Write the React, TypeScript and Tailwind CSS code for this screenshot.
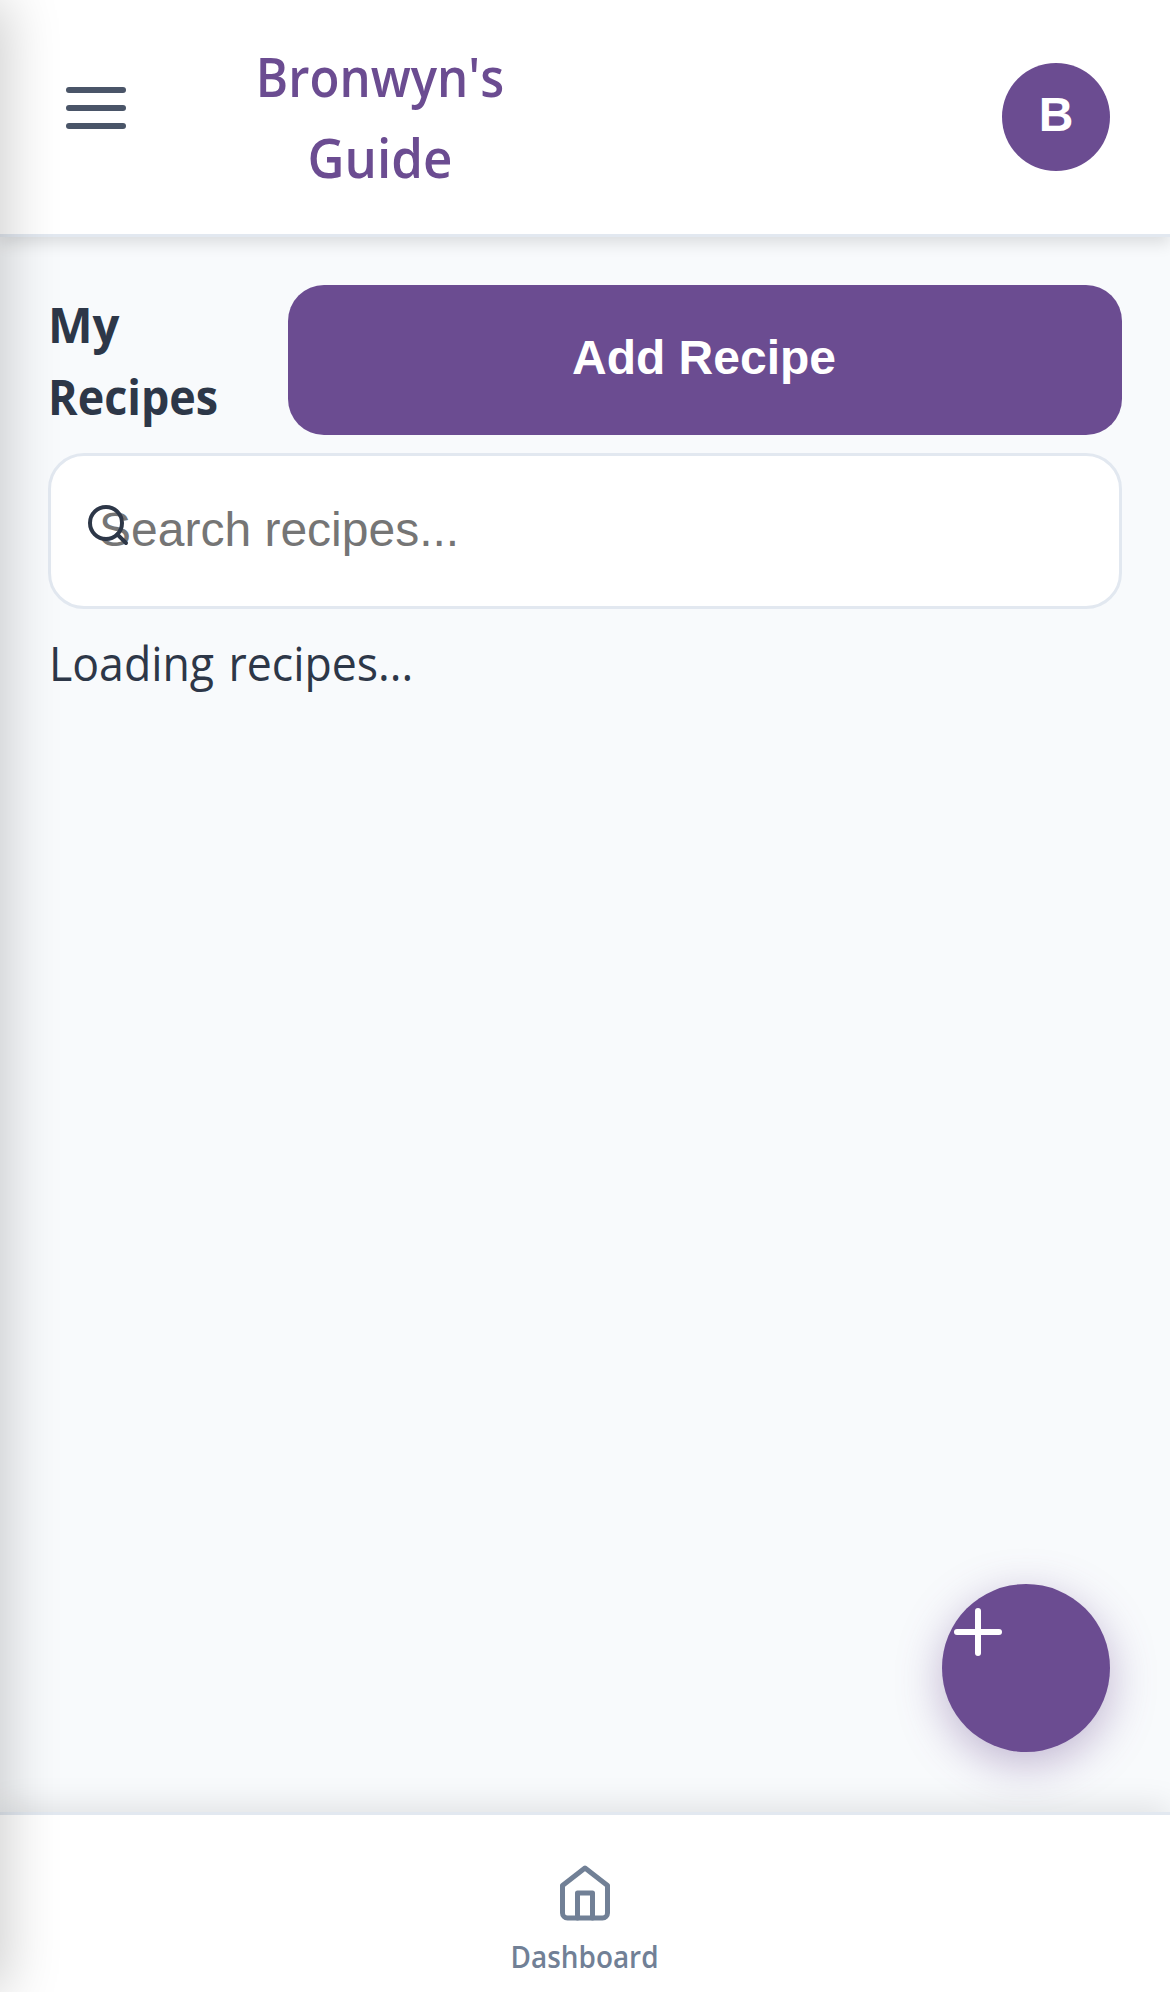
function SearchIcon() {
  return (
    <svg className="size-12" viewBox="0 0 24 24" fill="none" stroke="currentColor" strokeWidth="2" strokeLinecap="round" strokeLinejoin="round">
      <circle cx="11" cy="11" r="8" />
      <path d="M21 21l-4.35-4.35" />
    </svg>
  );
}

function HomeIcon() {
  return (
    <svg className="size-[60px]" viewBox="0 0 24 24" fill="none" stroke="currentColor" strokeWidth="2" strokeLinecap="round" strokeLinejoin="round">
      <path d="M3 9l9-7 9 7v11a2 2 0 0 1-2 2H5a2 2 0 0 1-2-2z" />
      <path d="M9 22V12h6v10" />
    </svg>
  );
}

function Header() {
  return (
    <header className="relative z-10 flex h-[237px] items-center border-b-[3px] border-[#e2e8f0] bg-white px-[60px] shadow-[0_6px_15px_rgba(0,0,0,0.12)]">
      <button className="mb-[18px] flex flex-col gap-3 px-1.5" aria-label="Menu">
        <span className="h-1.5 w-[60px] rounded-full bg-[#4a5568]" />
        <span className="h-1.5 w-[60px] rounded-full bg-[#4a5568]" />
        <span className="h-1.5 w-[60px] rounded-full bg-[#4a5568]" />
      </button>
      <h1 className="ml-[108px] w-[280px] text-center text-[54px] leading-[81px] font-semibold text-[#6b4c91]">
        <span className="block scale-x-[0.91]">Bronwyn's</span>
        <span className="block scale-x-[0.945]">Guide</span>
      </h1>
      <div className="ml-auto flex size-[108px] items-center justify-center rounded-full bg-[#6b4c91] pb-[5px] font-['Liberation_Sans',sans-serif] text-5xl font-bold text-white">
        B
      </div>
    </header>
  );
}

export default function App() {
  return (
    <div className="relative flex h-[1992px] w-full flex-col overflow-hidden bg-[#f8fafc] font-['Open_Sans',sans-serif] text-[#2d3748]">
      <Header />

      <main className="relative flex flex-1 flex-col px-12 pt-12">
        <div className="flex items-center">
          <h2 className="w-60 pt-0.5 text-5xl leading-[72px] font-bold">
            <span className="block origin-left scale-x-[0.985]">My</span>
            <span className="block origin-left scale-x-[0.935]">Recipes</span>
          </h2>
          <button className="h-[150px] flex-1 rounded-[36px] bg-[#6b4c91] pr-0.5 pb-1 font-['Liberation_Sans',sans-serif] text-5xl font-bold text-white">
            Add Recipe
          </button>
        </div>

        <div className="relative mt-[18px]">
          <input
            className="block h-[156px] w-full rounded-[36px] border-[3px] border-[#e2e8f0] bg-white pr-12 pb-1 pl-12 font-['Liberation_Sans',sans-serif] text-5xl outline-none placeholder:text-[#757575]"
            placeholder="Search recipes..."
          />
          <span className="absolute top-12 left-9">
            <SearchIcon />
          </span>
        </div>

        <p className="mt-[18px] origin-left scale-x-[0.93] pl-px text-5xl leading-[72px] [word-spacing:3px]">Loading recipes...</p>

        <button
          className="absolute right-[60px] bottom-[60px] size-[168px] rounded-full bg-[#6b4c91] shadow-[0_12px_45px_rgba(107,76,145,0.4)]"
          aria-label="Add"
        >
          <span className="absolute top-12 left-3 h-1.5 w-12 -translate-y-1/2 rounded-full bg-white" />
          <span className="absolute top-6 left-9 h-12 w-1.5 -translate-x-1/2 rounded-full bg-white" />
        </button>
      </main>

      <nav className="relative flex h-[180px] flex-col items-center border-t-[3px] border-[#e2e8f0] bg-white pt-12 text-[#718096] shadow-[0_-6px_30px_rgba(0,0,0,0.1)]">
        <HomeIcon />
        <span className="mt-[11px] scale-x-[0.93] text-[30px] leading-[45px] font-semibold">Dashboard</span>
      </nav>

      <aside className="pointer-events-none absolute inset-y-0 right-full z-20 w-[840px] shadow-[6px_0_52px_rgba(0,0,0,0.2)]" />
    </div>
  );
}
